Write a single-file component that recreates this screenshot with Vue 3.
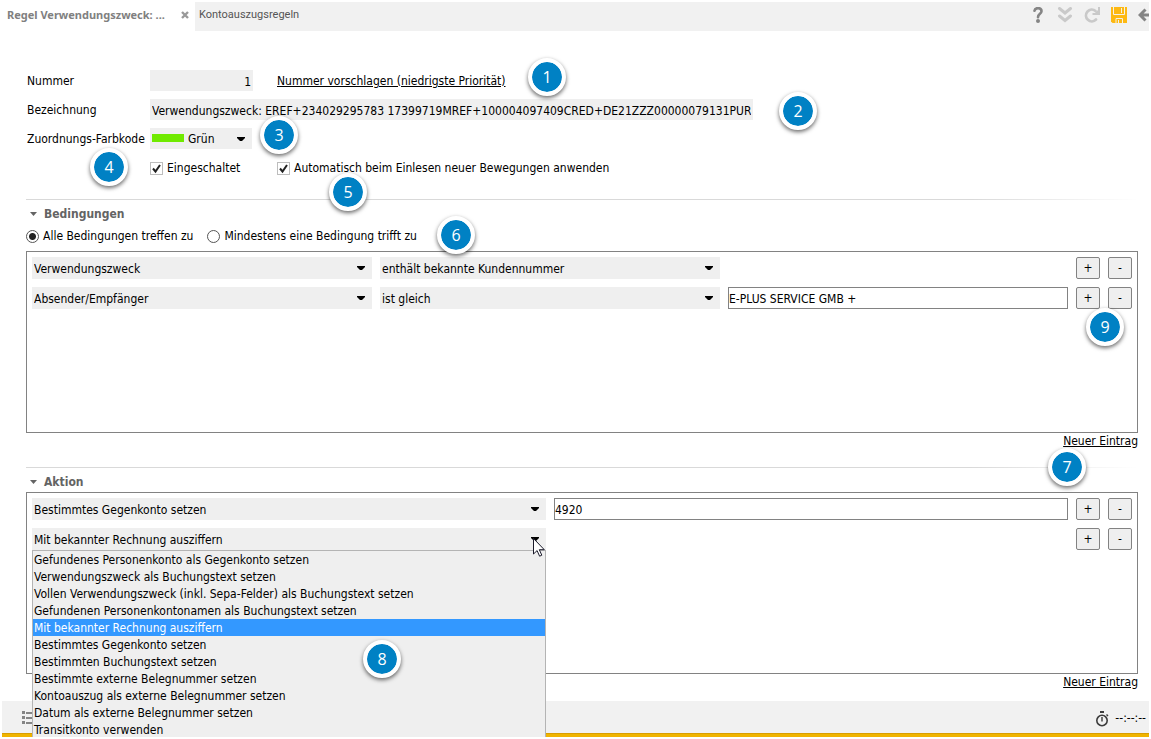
<script setup>
import { ref } from 'vue'

const nummer = ref('1')
const bezeichnung = ref('Verwendungszweck: EREF+234029295783 17399719MREF+100004097409CRED+DE21ZZZ00000079131PURP+RINP')
const farbe = ref('Grün')
const eingeschaltet = ref(true)
const automatisch = ref(true)
const modus = ref('alle')

const bedingungen = ref([
  { feld: 'Verwendungszweck', vergleich: 'enthält bekannte Kundennummer', wert: null },
  { feld: 'Absender/Empfänger', vergleich: 'ist gleich', wert: 'E-PLUS SERVICE GMB +' },
])

const aktionen = ref([
  { typ: 'Bestimmtes Gegenkonto setzen', wert: '4920', offen: false },
  { typ: 'Mit bekannter Rechnung ausziffern', wert: null, offen: true },
])

const felder = ['Verwendungszweck', 'Absender/Empfänger']
const vergleiche = ['enthält bekannte Kundennummer', 'ist gleich']
const aktionsTypen = [
  'Gefundenes Personenkonto als Gegenkonto setzen',
  'Verwendungszweck als Buchungstext setzen',
  'Vollen Verwendungszweck (inkl. Sepa-Felder) als Buchungstext setzen',
  'Gefundenen Personenkontonamen als Buchungstext setzen',
  'Mit bekannter Rechnung ausziffern',
  'Bestimmtes Gegenkonto setzen',
  'Bestimmten Buchungstext setzen',
  'Bestimmte externe Belegnummer setzen',
  'Kontoauszug als externe Belegnummer setzen',
  'Datum als externe Belegnummer setzen',
  'Transitkonto verwenden',
]
const hinweise = [1, 2, 3, 4, 5, 6, 7, 8, 9]
</script>

<template>
  <div class="window">
    <header class="topbar">
      <div class="tab active">
        <span>Regel Verwendungszweck: ...</span>
        <button class="icon-btn" aria-label="Tab schließen">
          <svg width="8" height="8" viewBox="0 0 8 8"><path d="M1 1l6 6M7 1l-6 6" stroke="#999" stroke-width="2.4" /></svg>
        </button>
      </div>
      <div class="bar">
        <a class="tab-link" href="#">Kontoauszugsregeln</a>
        <nav class="tools">
          <button class="icon-btn" aria-label="Hilfe">
            <svg width="16" height="16" viewBox="0 0 16 16"><path d="M4.500 3.800C5 .2 11.500.2 11.500 4.200c0 2.600-3.500 2.600-3.500 6" fill="none" stroke="#858585" stroke-width="2.600" stroke-linecap="round" /><circle cx="8" cy="14" r="2" fill="#858585" /></svg>
          </button>
          <button class="icon-btn" aria-label="Nach unten">
            <svg width="16" height="16" viewBox="0 0 16 16"><path d="M2.500 1.500l5.500 4.500 5.500-4.500M2.500 9l5.500 4.500L13.500 9" fill="none" stroke="#c9c9c9" stroke-width="3" stroke-linecap="round" /></svg>
          </button>
          <button class="icon-btn" aria-label="Aktualisieren">
            <svg width="16" height="16" viewBox="0 0 16 16"><path d="M11.500 4A5.800 5.800 0 1 0 12 12.500" fill="none" stroke="#c9c9c9" stroke-width="2.800" stroke-linecap="round" /><path d="M16 0v8H8.500V6h2.500l3-3V0z" fill="#c9c9c9" /></svg>
          </button>
          <button class="icon-btn" aria-label="Speichern">
            <svg width="16" height="16" viewBox="0 0 16 16"><path d="M0 0h16v16H1.500L0 14.500z" fill="#fdb913" /><path d="M2.500 0v7.500h11V0" fill="none" stroke="#f6f2e6" /><path d="M10 1h1v5h-1z" fill="#f6f2e6" /><path d="M5 16v-4.500h6.500V16M7.500 13v3" fill="none" stroke="#f6f2e6" /></svg>
          </button>
          <button class="icon-btn" aria-label="Zurück">
            <svg width="11" height="16" viewBox="0 0 11 16"><path d="M7.500 2.500L2 8l5.500 5.500M2 8h10" fill="none" stroke="#858585" stroke-width="3" /></svg>
          </button>
        </nav>
      </div>
    </header>

    <main class="content">
      <form class="form" @submit.prevent>
        <div class="form-row">
          <label for="nummer">Nummer</label>
          <input id="nummer" v-model="nummer" class="field number" type="text" />
          <a class="link" href="#">Nummer vorschlagen (niedrigste Priorität)</a>
        </div>
        <div class="form-row">
          <label for="bezeichnung">Bezeichnung</label>
          <input id="bezeichnung" v-model="bezeichnung" class="field long" type="text" />
        </div>
        <div class="form-row">
          <label for="farbe">Zuordnungs-Farbkode</label>
          <div class="combo color">
            <select id="farbe" v-model="farbe"><option>Grün</option></select>
            <span class="swatch"></span>
            <svg class="arrow" width="8" height="4" viewBox="0 0 8 4"><path d="M0 0h8v1L5 4H3L0 1z" /></svg>
          </div>
        </div>
        <div class="form-row checks">
          <span></span>
          <label class="check number-col">
            <span class="box"><input v-model="eingeschaltet" type="checkbox" /><svg width="13" height="13" viewBox="0 0 13 13"><path d="M3 6.500l2.500 3L10 3" /></svg></span>
            Eingeschaltet
          </label>
          <label class="check">
            <span class="box"><input v-model="automatisch" type="checkbox" /><svg width="13" height="13" viewBox="0 0 13 13"><path d="M3 6.500l2.500 3L10 3" /></svg></span>
            Automatisch beim Einlesen neuer Bewegungen anwenden
          </label>
        </div>
      </form>

      <section class="section">
        <h2><svg width="7" height="4" viewBox="0 0 7 4"><path d="M0 0h7L3.500 4z" /></svg>Bedingungen</h2>
        <div class="radios">
          <label><input v-model="modus" type="radio" name="modus" value="alle" />Alle Bedingungen treffen zu</label>
          <label><input v-model="modus" type="radio" name="modus" value="eine" />Mindestens eine Bedingung trifft zu</label>
        </div>
        <div class="panel">
          <div v-for="(b, i) in bedingungen" :key="i" class="rule three">
            <div class="combo">
              <select v-model="b.feld" aria-label="Feld"><option v-for="f in felder" :key="f">{{ f }}</option></select>
              <svg class="arrow" width="8" height="4" viewBox="0 0 8 4"><path d="M0 0h8v1L5 4H3L0 1z" /></svg>
            </div>
            <div class="combo">
              <select v-model="b.vergleich" aria-label="Vergleich"><option v-for="v in vergleiche" :key="v">{{ v }}</option></select>
              <svg class="arrow" width="8" height="4" viewBox="0 0 8 4"><path d="M0 0h8v1L5 4H3L0 1z" /></svg>
            </div>
            <input v-if="b.wert !== null" v-model="b.wert" class="value" type="text" aria-label="Wert" />
            <span v-else></span>
            <button class="small">+</button>
            <button class="small">-</button>
          </div>
        </div>
        <div class="new"><a class="link" href="#">Neuer Eintrag</a></div>
      </section>

      <section class="section">
        <h2><svg width="7" height="4" viewBox="0 0 7 4"><path d="M0 0h7L3.500 4z" /></svg>Aktion</h2>
        <div class="panel">
          <div v-for="(a, i) in aktionen" :key="i" class="rule two">
            <div class="combo">
              <select v-model="a.typ" aria-label="Aktion"><option v-for="t in aktionsTypen" :key="t">{{ t }}</option></select>
              <svg class="arrow" width="8" height="4" viewBox="0 0 8 4"><path d="M0 0h8v1L5 4H3L0 1z" /></svg>
              <template v-if="a.offen">
                <ul class="menu" role="listbox" aria-label="Aktion auswählen">
                  <li v-for="t in aktionsTypen" :key="t" role="option" :aria-selected="t === a.typ" :class="{ selected: t === a.typ }">{{ t }}</li>
                </ul>
                <svg class="cursor" width="12" height="19" viewBox="0 0 12 19"><path d="M.5 .5v15.500l3.600-3.400 2.500 5.600 2.200-1-2.500-5.500h5z" fill="#fff" stroke="#1a1a2a" /></svg>
              </template>
            </div>
            <input v-if="a.wert !== null" v-model="a.wert" class="value" type="text" aria-label="Wert" />
            <span v-else></span>
            <button class="small">+</button>
            <button class="small">-</button>
          </div>
        </div>
        <div class="new"><a class="link" href="#">Neuer Eintrag</a></div>
      </section>
    </main>

    <footer class="status">
      <button class="icon-btn" aria-label="Liste">
        <svg width="14" height="14" viewBox="0 0 14 14"><path d="M0 0h3v3H0zM0 5h3v3H0zM0 10h3v3H0zM4 1h10v2H4zM4 6h10v2H4zM4 11h10v2H4z" fill="#858585" /></svg>
      </button>
      <div class="timer">
        <svg width="13" height="16" viewBox="0 0 13 16"><circle cx="6" cy="9.500" r="5.200" fill="none" stroke="#3c3c3c" stroke-width="1.600" /><path d="M4 0h4v2H4zM5.300 6h1.400v4.500H5.300zM10 4l1-1 1.500 1.500-1 1z" fill="#3c3c3c" /></svg>
        <span>--:--:--</span>
      </div>
    </footer>

    <span v-for="n in hinweise" :key="n" class="callout" :class="'callout-' + n">{{ n }}</span>
  </div>
</template>

<style>
body {
  margin: 0;
  background: #fff;
}
</style>

<style scoped>
.window {
  position: relative;
  display: flex;
  flex-direction: column;
  box-sizing: border-box;
  height: calc(100vh - 4px);
  min-height: 600px;
  margin: 2px;
  overflow: hidden;
  color: #000;
  font: 12px/17px "DejaVu Sans Condensed", "Noto Sans", sans-serif;
}
input, select, button {
  box-sizing: border-box;
  margin: 0;
  padding: 0;
  border: 0;
  border-radius: 0;
  color: inherit;
  font: inherit;
}
.topbar {
  display: flex;
  height: 29px;
}
.tab {
  display: flex;
  align-items: center;
  justify-content: space-between;
  box-sizing: border-box;
  width: 193px;
  padding: 0 6px 3px 5px;
  color: #808080;
  font: 700 11px/16px "Noto Sans", sans-serif;
  white-space: nowrap;
}
.bar {
  display: flex;
  flex: 1;
  align-items: center;
  justify-content: space-between;
  padding: 0 0 3px 4px;
  background: #f1f1f1;
}
.tab-link {
  color: #555;
  font: 11px/16px Roboto, sans-serif;
  text-decoration: none;
}
.tools {
  display: flex;
  gap: 11px;
}
.icon-btn {
  display: flex;
  background: none;
}
.content {
  display: flex;
  flex: 1;
  flex-direction: column;
  padding: 39px 11px 0 24px;
}
.form {
  display: flex;
  flex-direction: column;
  gap: 8px;
  margin-bottom: 19px;
}
.form-row {
  display: flex;
  align-items: center;
  height: 21px;
}
.checks {
  height: 23px;
}
.form-row > :first-child {
  width: 123px;
  padding-top: 2px;
  padding-left: 1px;
  white-space: nowrap;
}
.field {
  height: 21px;
  padding: 2px 2px 0;
  background: #efefef;
}
.number {
  width: 103px;
  text-align: right;
}
.long {
  width: 603px;
}
.number + .link {
  margin-left: 24px;
  padding-top: 2px;
}
.link {
  color: #000;
  text-decoration: underline;
}
.check {
  display: flex;
  align-items: center;
  gap: 4px;
}
.number-col {
  width: 127px;
}
.box {
  display: grid;
}
.box > * {
  grid-area: 1 / 1;
}
.box input {
  width: 13px;
  height: 13px;
  appearance: none;
  border: 1px solid #bdbdbd;
  background: #fff;
}
.box svg {
  visibility: hidden;
  fill: none;
  stroke: #222;
  stroke-width: 2;
  pointer-events: none;
}
.box input:checked + svg {
  visibility: visible;
}
.combo {
  position: relative;
  display: grid;
  background: #efefef;
}
.combo select {
  width: 100%;
  height: 22px;
  padding: 2px 20px 0 2px;
  appearance: none;
  background: none;
}
.color {
  width: 102px;
}
.color select {
  height: 21px;
  padding-left: 38px;
}
.swatch {
  position: absolute;
  top: 6px;
  left: 2px;
  width: 32px;
  height: 8px;
  background: #70ea00;
}
.arrow {
  position: absolute;
  top: 9px;
  right: 7px;
  pointer-events: none;
}
.section {
  display: flex;
  flex: 1 0 auto;
  flex-direction: column;
}
.section::before {
  height: 1px;
  background: linear-gradient(to right, #d9d9d9 85%, transparent);
  content: "";
}
.section h2 {
  display: flex;
  align-items: center;
  gap: 7px;
  margin: 6px 0 2px;
  padding-left: 4px;
  color: #646464;
  font-size: 12px;
  line-height: 16px;
}
.section h2 svg {
  fill: #646464;
}
.radios {
  display: flex;
  gap: 14px;
  height: 27px;
}
.radios label {
  display: flex;
  align-items: center;
  gap: 4px;
  height: 24px;
}
.radios input {
  width: 13px;
  height: 13px;
  appearance: none;
  border: 1px solid #555;
  border-radius: 50%;
}
.radios input:checked {
  background: radial-gradient(circle, #222 3px, #fff 4px);
}
.panel {
  display: flex;
  flex: 1;
  flex-direction: column;
  gap: 8px;
  min-height: 100px;
  padding: 5px;
  border: 1px solid #828282;
}
.rule {
  display: grid;
  gap: 8px;
}
.three {
  grid-template-columns: 1fr 1fr 1fr 24px 24px;
}
.two {
  grid-template-columns: 1fr 1fr 24px 24px;
}
.value {
  width: 100%;
  min-width: 0;
  height: 22px;
  padding-top: 2px;
  border: 1px solid #828282;
}
.small {
  height: 22px;
  border: 1px solid #828282;
  border-radius: 2px;
  background: #efefef;
}
.new {
  height: 34px;
  line-height: 16px;
  text-align: right;
}
.section:last-child .new {
  height: 27px;
}
.menu {
  position: absolute;
  z-index: 2;
  top: 22px;
  right: 0;
  left: 0;
  margin: 0;
  padding: 0;
  border: 1px solid #b4b4b4;
  background: #efefef;
  line-height: 19px;
  list-style: none;
}
.menu li {
  height: 17px;
  padding-left: 1px;
}
.menu .selected {
  background: #3398ff;
  color: #fff;
}
.cursor {
  position: absolute;
  z-index: 3;
  top: 10px;
  right: 1px;
}
.status {
  display: flex;
  align-items: center;
  justify-content: space-between;
  height: 33px;
  padding: 0 3px 0 20px;
  border-bottom: 3px solid #f0b400;
  background: #f1f1f1;
  box-shadow: inset 0 -1px #d99e00;
}
.timer {
  display: flex;
  align-items: center;
  gap: 6px;
  padding-top: 2px;
}
.callout {
  position: absolute;
  z-index: 4;
  width: 30px;
  height: 30px;
  border: 4px solid #fff;
  border-radius: 50%;
  background: #0081c4;
  background-clip: padding-box;
  box-shadow: 0 2px 4px rgba(0, 0, 0, 0.6);
  color: #fff;
  font: 16px/30px "Open Sans", sans-serif;
  text-align: center;
}
.callout-1 { top: 56px; left: 526px; }
.callout-2 { top: 90px; left: 777px; }
.callout-3 { top: 114px; left: 258px; }
.callout-4 { top: 146px; left: 88px; }
.callout-5 { top: 171px; left: 327px; }
.callout-6 { top: 214px; left: 435px; }
.callout-7 { top: 446px; right: 63px; }
.callout-8 { top: 638px; left: 361px; }
.callout-9 { top: 306px; right: 25px; }
</style>
